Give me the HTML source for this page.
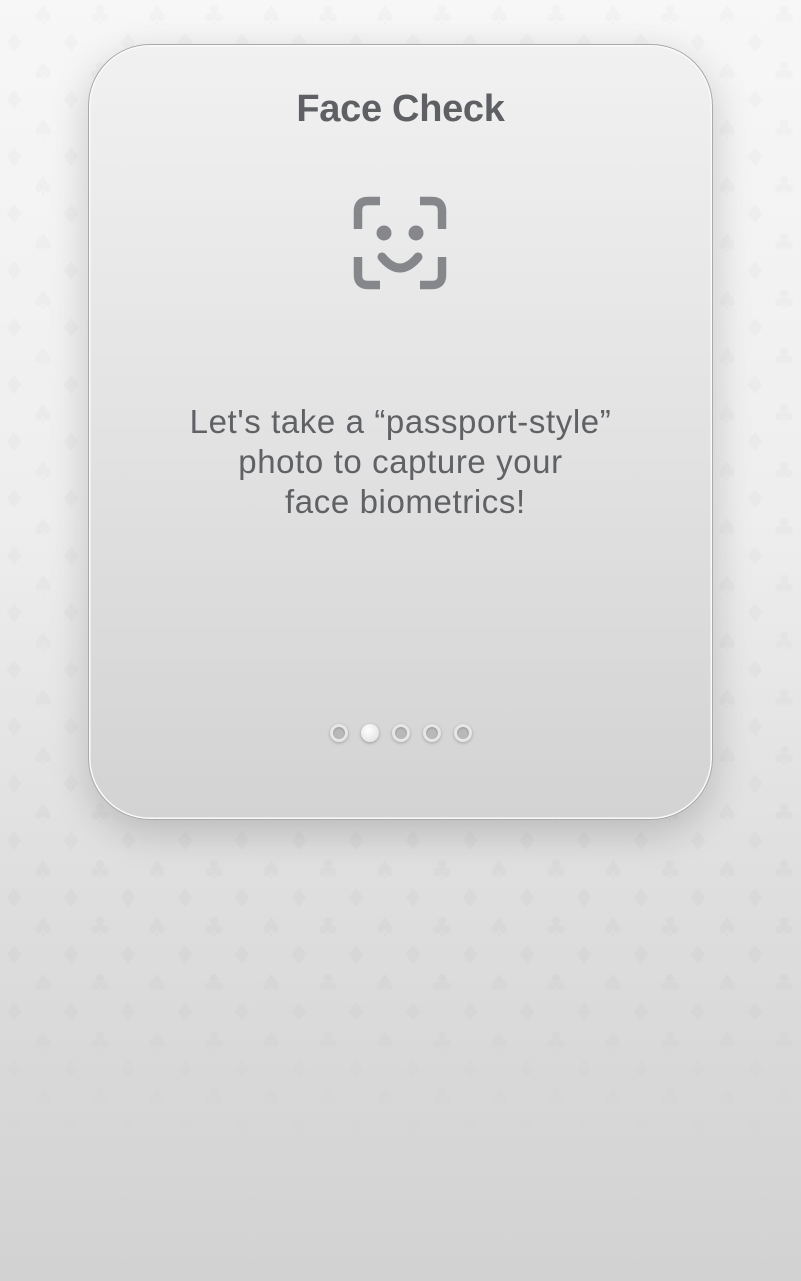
<!DOCTYPE html>
<html><head><meta charset="utf-8">
<style>
html,body{margin:0;padding:0}
body{width:801px;height:1281px;position:relative;overflow:hidden;
background:linear-gradient(180deg,#f7f7f7 0%,#eeeeee 40%,#dedede 70%,#d2d2d2 100%);
font-family:"Liberation Sans",Roboto,sans-serif;}
.card{position:absolute;left:88px;top:44px;width:623px;height:774px;border-radius:62px;
background:linear-gradient(180deg,#f1f1f1 0%,#e4e4e4 45%,#d3d3d3 100%);
border:1px solid #a9a9a9;box-shadow:0 0 0 1.5px #fafafa inset,0 12px 40px rgba(0,0,0,0.18);}
h1{position:absolute;left:0;right:0;top:88px;margin:0;text-align:center;font-size:38px;font-weight:bold;color:#5e6064;letter-spacing:-0.3px}
.txt{position:absolute;left:0;right:0;top:402px;text-align:center;font-size:33px;line-height:40px;color:#5f6165;letter-spacing:0.6px}
.dots{position:absolute;top:724px;left:330px;display:flex;gap:13px}
.d{width:18px;height:18px;border-radius:50%;box-sizing:border-box;
background:#b9b9b9;border:3px solid #e6e6e6;box-shadow:0 1px 3px rgba(0,0,0,0.25), inset 0 1px 2px rgba(0,0,0,0.2)}
.d.a{background:radial-gradient(circle at 40% 35%,#fff,#dcdcdc);border:none;box-shadow:0 1px 3px rgba(0,0,0,0.3)}
</style></head><body>
<svg style="position:absolute;left:0;top:0" width="801" height="1281">
<defs><pattern id="p" width="114" height="57" patternUnits="userSpaceOnUse">
<g fill="#000" fill-opacity="0.02" font-family="DejaVu Sans" font-size="26" text-anchor="middle">
<text x="43" y="24">♠</text><text x="100" y="24">♣</text>
<text x="14" y="52">♦</text><text x="71" y="52">♦</text>
</g></pattern>
<linearGradient id="g" x1="0" y1="0" x2="0" y2="1"><stop offset="0" stop-color="#fff"/><stop offset="0.75" stop-color="#fff"/><stop offset="0.9" stop-color="#000"/></linearGradient>
<mask id="m"><rect width="801" height="1281" fill="url(#g)"/></mask></defs>
<rect width="801" height="1281" fill="url(#p)" mask="url(#m)"/>
</svg>
<div class="card"></div>
<h1>Face Check</h1>
<svg style="position:absolute;left:350px;top:193px" width="100" height="100" viewBox="0 0 100 100">
<g fill="none" stroke="#85878a" stroke-width="8.5" stroke-linecap="butt">
<path d="M8 36 V18 Q8 8 18 8 H30"/>
<path d="M70 8 H82 Q92 8 92 18 V36"/>
<path d="M8 64 V82 Q8 92 18 92 H30"/>
<path d="M70 92 H82 Q92 92 92 82 V64"/>
<path d="M32 64 Q50 86 68 64" stroke-linecap="round" stroke-width="9"/>
</g>
<circle cx="34" cy="40" r="7.5" fill="#85878a"/>
<circle cx="66" cy="40" r="7.5" fill="#85878a"/>
</svg>
<div class="txt">Let's take a “passport-style”<br>photo to capture your<br>&nbsp;face biometrics!</div>
<div class="dots"><div class="d"></div><div class="d a"></div><div class="d"></div><div class="d"></div><div class="d"></div></div>
</body></html>
